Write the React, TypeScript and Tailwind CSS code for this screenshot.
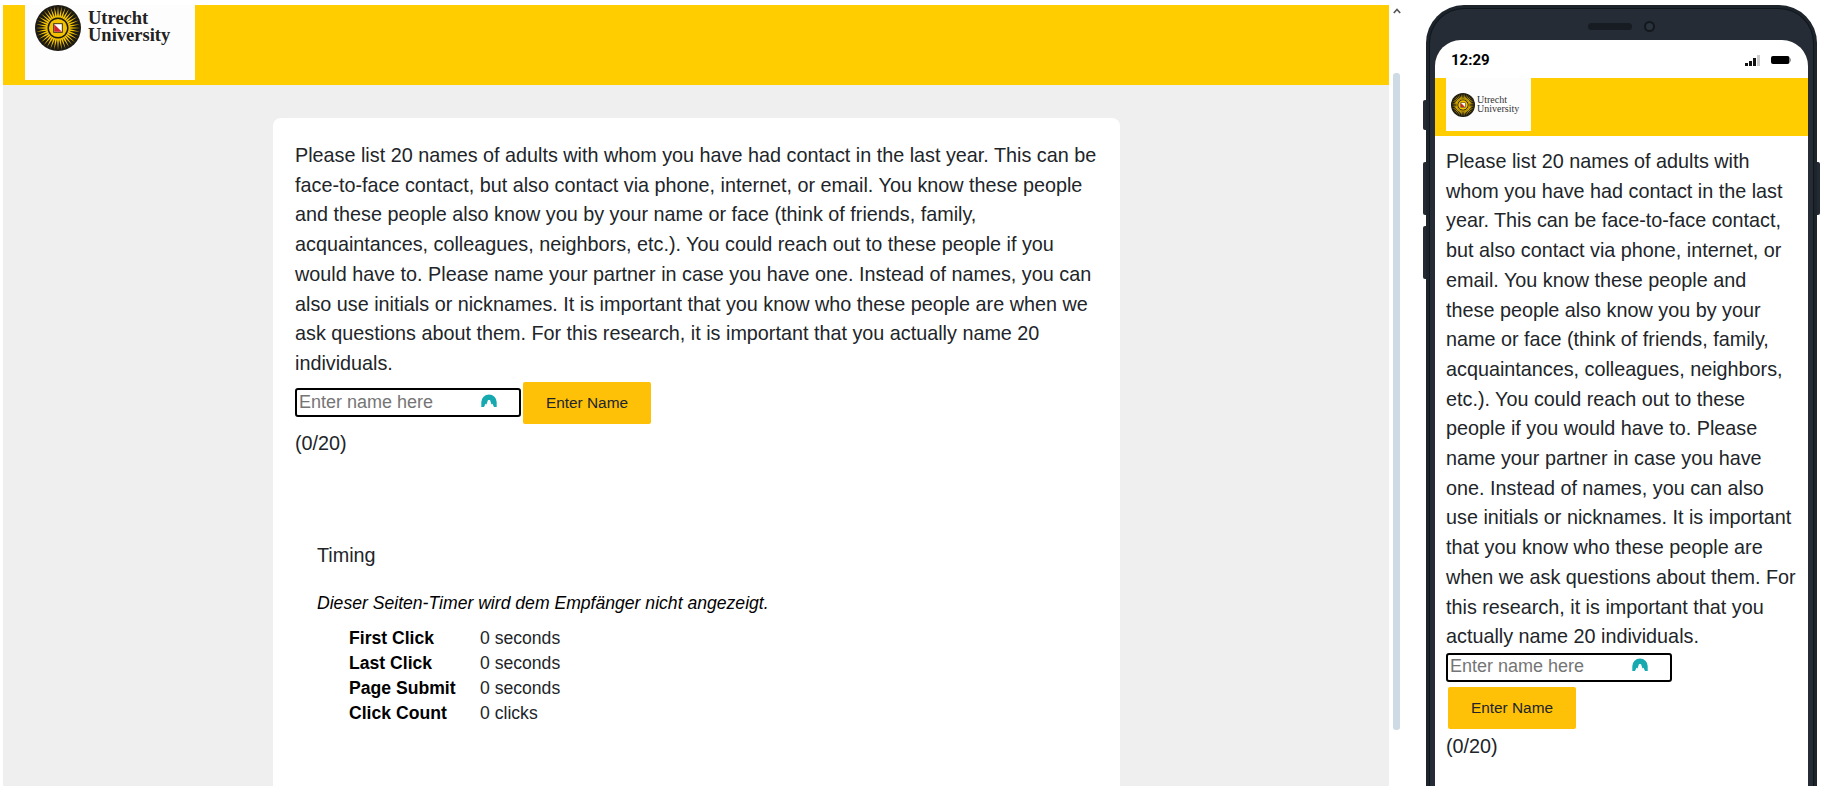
import { Fragment } from "react"

const INTRO =
    "Please list 20 names of adults with whom you have had contact in the last year. This can be face-to-face contact, but also contact via phone, internet, or email. You know these people and these people also know you by your name or face (think of friends, family, acquaintances, colleagues, neighbors, etc.). You could reach out to these people if you would have to. Please name your partner in case you have one. Instead of names, you can also use initials or nicknames. It is important that you know who these people are when we ask questions about them. For this research, it is important that you actually name 20 individuals."

const TIMING = [
    ["First Click", "0 seconds"],
    ["Last Click", "0 seconds"],
    ["Page Submit", "0 seconds"],
    ["Click Count", "0 clicks"],
]

const RAYS = Array.from({ length: 36 }, (_, i) => i * 10)

function Sun({ className }: { className: string }) {
    return (
        <svg viewBox="0 0 48 48" className={className}>
            <circle cx="24" cy="24" r="24" fill="#1c1a12" />
            {RAYS.map((deg) => (
                <path key={deg} d="M22.9 13 L24 1 L25.1 13 Z" fill="#f5c400" transform={`rotate(${deg} 24 24)`} />
            ))}
            <circle cx="24" cy="24" r="9.5" fill="#f2c200" />
            <rect x="19.5" y="19.5" width="9" height="9" fill="#fff" stroke="#3a2a10" strokeWidth="1" />
            <path d="M20 20 L28 28 L20 28 Z" fill="#d2232a" />
        </svg>
    )
}

function VpnIcon({ className }: { className: string }) {
    return (
        <svg viewBox="0 0 16 14" className={className}>
            <path
                d="M0.3 13 L0.3 8.2 A7.7 7.7 0 0 1 15.7 8.2 L15.7 13 L13 13 L11.5 9.8 L10.5 10.5 L9 6 L7 6 L5.5 10.5 L4.5 9.8 L3 13 Z"
                fill="#16aab0"
            />
        </svg>
    )
}

function NameInput() {
    return (
        <div className="flex items-center w-[226px] h-[29px] border-2 border-black rounded-[3px] pl-[2px] bg-white">
            <input
                placeholder="Enter name here"
                className="w-[182px] pb-[1px] text-[18px] outline-none placeholder:text-[#757575] bg-transparent"
            />
            <VpnIcon className="w-4 h-[14px] -mt-1" />
        </div>
    )
}

function EnterButton() {
    return (
        <button className="w-[128px] h-[42px] pb-[1px] bg-[#ffc107] rounded-[2px] text-[15.4px] text-[#212529]">
            Enter Name
        </button>
    )
}

function DesktopView() {
    return (
        <div className="w-[1386px] ml-[3px] mt-[5px] h-[781px] bg-[#efefef] overflow-hidden">
            <div className="h-[80px] bg-[#ffcd00] pl-[22px]">
                <div className="w-[170px] h-[75px] bg-[#fdfdfd] flex items-start pl-[10px]">
                    <Sun className="w-[46px] h-[46px] shrink-0" />
                    <div className="ml-[7px] mt-[5px] text-[18.5px] leading-[17px] font-bold text-[#222] [font-family:'Liberation_Serif',serif]">
                        Utrecht
                        <br />
                        University
                    </div>
                </div>
            </div>
            <div className="w-[847px] ml-[270px] mt-[33px] h-[700px] bg-white rounded-t-lg pl-[22px] pr-[21px] pt-[23px] text-[#212529]">
                <p className="text-[19.8px] leading-[29.7px]">{INTRO}</p>
                <div className="flex items-center gap-[2px] mt-[3px]">
                    <NameInput />
                    <EnterButton />
                </div>
                <p className="text-[19.8px] leading-[30px] mt-[4px]">(0/20)</p>
                <div className="ml-[22px] mt-[82px]">
                    <p className="text-[19.8px] leading-[30px]">Timing</p>
                    <p className="text-[17.6px] leading-[24px] italic mt-[21px] text-black">
                        Dieser Seiten-Timer wird dem Empfänger nicht angezeigt.
                    </p>
                    <div className="grid grid-cols-[131px_1fr] ml-[32px] mt-[11px] text-[17.6px] leading-[25px]">
                        {TIMING.map(([label, value]) => (
                            <Fragment key={label}>
                                <span className="font-bold text-black">{label}</span>
                                <span>{value}</span>
                            </Fragment>
                        ))}
                    </div>
                </div>
            </div>
        </div>
    )
}

function Scrollbar() {
    return (
        <div className="w-[7px] ml-[4px] mt-[8px] flex flex-col items-center">
            <svg viewBox="0 0 8 6" className="w-[8px] h-[6px] shrink-0">
                <path d="M0.8 5 L4 1.5 L7.2 5" fill="none" stroke="#555" strokeWidth="1.6" />
            </svg>
            <div className="w-[7px] h-[657px] mt-[59px] bg-[#cfdbe4] rounded-[3px]" />
        </div>
    )
}

function PhoneView() {
    return (
        <div className="relative w-[391px] h-[900px] ml-[26px] mt-[5px] shrink-0">
            <div className="absolute -left-[3px] top-[95px] w-[3px] h-[30px] bg-[#232a33] rounded-l-[2px]" />
            <div className="absolute -left-[3px] top-[157px] w-[3px] h-[53px] bg-[#232a33] rounded-l-[2px]" />
            <div className="absolute -left-[3px] top-[221px] w-[3px] h-[53px] bg-[#232a33] rounded-l-[2px]" />
            <div className="absolute -right-[3px] top-[157px] w-[3px] h-[53px] bg-[#232a33] rounded-r-[2px]" />
            <div className="h-full rounded-t-[38px] bg-[#1d242c] p-[3px]">
                <div className="h-full rounded-t-[35px] bg-[#252c35] border-t border-l border-r border-[#11161b] px-[5px] pt-[31px] relative">
                    <div className="absolute top-[14px] left-[158px] w-[44px] h-[7px] rounded-full bg-[#171c22]" />
                    <div className="absolute top-[12px] left-[214px] w-[11px] h-[11px] rounded-full border-2 border-[#14181d] bg-[#2b333d]" />
                    <div className="h-[860px] bg-white rounded-t-[26px] overflow-hidden">
                        <div className="h-[38px] flex items-center justify-between pl-[16px] pr-[17px] pt-[2px]">
                            <span className="text-[15px] font-bold text-black [font-family:Roboto,sans-serif]">12:29</span>
                            <div className="flex items-center gap-[11px]">
                                <svg viewBox="0 0 15 11" className="w-[15px] h-[11px]">
                                    <rect x="0" y="8" width="3" height="3" fill="#111" />
                                    <rect x="4" y="6" width="3" height="5" fill="#111" />
                                    <rect x="8" y="3" width="3" height="8" fill="#111" />
                                    <rect x="12" y="0" width="3" height="11" fill="#ccc" />
                                </svg>
                                <svg viewBox="0 0 20 8" className="w-[20px] h-[8px]">
                                    <rect x="0" y="0" width="18.5" height="8" rx="2" fill="#000" />
                                    <rect x="18.5" y="2.5" width="1.5" height="3" fill="#999" />
                                </svg>
                            </div>
                        </div>
                        <div className="h-[58px] bg-[#ffcd00] pl-[11px]">
                            <div className="w-[85px] h-[53px] bg-[#fdfdfd] flex items-center pl-[5px]">
                                <Sun className="w-[24px] h-[24px] shrink-0" />
                                <div className="ml-[2px] text-[10px] leading-[8.5px] text-[#333] [font-family:'Liberation_Serif',serif]">
                                    Utrecht
                                    <br />
                                    University
                                </div>
                            </div>
                        </div>
                        <div className="pl-[11px] pt-[11px] text-[#212529]">
                            <p className="text-[19.8px] leading-[29.7px] w-[352px]">{INTRO}</p>
                            <div className="mt-[1px]">
                                <NameInput />
                            </div>
                            <div className="ml-[2px] mt-[5px]">
                                <EnterButton />
                            </div>
                            <p className="text-[19.8px] leading-[30px] mt-[2px]">(0/20)</p>
                        </div>
                    </div>
                </div>
            </div>
        </div>
    )
}

export default function App() {
    return (
        <div className="flex w-[1822px] h-[786px] overflow-hidden bg-white [font-family:'Liberation_Sans',Arial,sans-serif]">
            <DesktopView />
            <Scrollbar />
            <PhoneView />
        </div>
    )
}
